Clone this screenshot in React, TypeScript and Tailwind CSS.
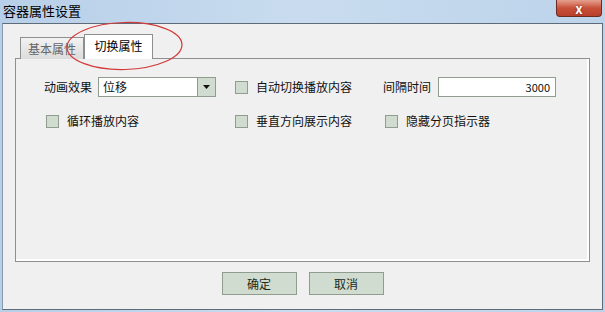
import React from "react";

const font = { fontFamily: '"Noto Sans CJK SC", "Noto Sans", sans-serif' };

function CheckBox({ label }: { label: string }) {
  return (
    <label className="flex items-center gap-[8px] text-[12px] text-[#111]">
      <span className="block h-[13px] w-[13px] border border-[#8f9c8f] bg-[#cfdccf]" />
      {label}
    </label>
  );
}

function Button({ children }: { children: React.ReactNode }) {
  return (
    <button className="h-[23px] w-[75px] border border-[#8f9c8f] bg-[#cfdccf] text-[12px] text-[#1c2a1c]">
      {children}
    </button>
  );
}

export default function App() {
  return (
    <div
      style={font}
      className="relative flex h-[312px] w-[605px] flex-col bg-gradient-to-r from-[#b7cfe8] via-[#c9dcef] to-[#bcd3ea]"
    >
      {/* title bar */}
      <div className="flex h-[23px] items-start justify-between">
        <span className="pl-[3px] pt-[3px] text-[13px] leading-[16px] text-black">容器属性设置</span>
        <div className="mr-[3px] flex h-[17px] w-[46px] items-center justify-center rounded-b-[4px] border border-t-0 border-[#6b2b22] bg-gradient-to-b from-[#e4a08f] via-[#c8503a] to-[#b93f2c] text-[13px] font-bold leading-none text-white [text-shadow:0_0_2px_#5a1a10]">
          x
        </div>
      </div>

      {/* window body */}
      <div className="mx-[2px] mb-[2px] flex flex-1 flex-col border border-[#5e6b78] border-l-[#8799ad] bg-[#f0f0f0] px-[12px] pt-[10px]">
        {/* tabs */}
        <div className="relative z-10 flex h-[24px] items-end pl-[5px]">
          <div className="mb-[-1px] flex h-[22px] w-[64px] items-center justify-center border border-b-0 border-[#8e8f8f] bg-gradient-to-b from-[#f2f2f2] to-[#dcdcdc] text-[12px] text-[#666]">
            基本属性
          </div>
          <div className="mb-[-1px] flex h-[25px] w-[69px] items-center justify-center border border-b-0 border-[#8e8f8f] bg-white pb-[2px] text-[12px] text-black">
            切换属性
          </div>
        </div>

        {/* panel */}
        <div className="flex h-[204px] flex-col border border-[#8e8f8f] shadow-[inset_-2px_-2px_0_#ffffff]">
          <div className="mt-[18px] flex h-[20px] items-center pl-[28px] text-[12px] text-[#111]">
            <span className="w-[54px]">动画效果</span>
            <div className="flex h-[20px] w-[118px] border border-[#8f9c8f] bg-white">
              <span className="flex-1 pl-[4px] leading-[18px]">位移</span>
              <span className="flex w-[18px] items-center justify-center border-l border-[#8f9c8f] bg-[#cfdccf]">
                <svg width="7" height="4" viewBox="0 0 7 4">
                  <path d="M0 0h7L3.5 4z" fill="#111" />
                </svg>
              </span>
            </div>
            <div className="ml-[19px] w-[148px]">
              <CheckBox label="自动切换播放内容" />
            </div>
            <span className="w-[55px]">间隔时间</span>
            <div className="h-[20px] w-[118px] border border-[#8f9c8f] bg-white pr-[5px] text-right text-[11px] leading-[18px]">
              3000
            </div>
          </div>
          <div className="mt-[14px] flex h-[20px] items-center pl-[30px]">
            <div className="w-[189px]">
              <CheckBox label="循环播放内容" />
            </div>
            <div className="w-[150px]">
              <CheckBox label="垂直方向展示内容" />
            </div>
            <CheckBox label="隐藏分页指示器" />
          </div>
        </div>

        {/* buttons */}
        <div className="mt-[10px] flex justify-center gap-[12px]">
          <Button>确定</Button>
          <Button>取消</Button>
        </div>
      </div>

      {/* annotation ellipse */}
      <svg className="pointer-events-none absolute left-[65px] top-[21px] z-20" width="120" height="51" viewBox="0 0 120 51">
        <ellipse cx="59.5" cy="25" rx="57.5" ry="23.5" fill="none" stroke="#d23a3a" strokeWidth="1.2" transform="rotate(-1.5 59.5 25)" />
      </svg>
    </div>
  );
}
